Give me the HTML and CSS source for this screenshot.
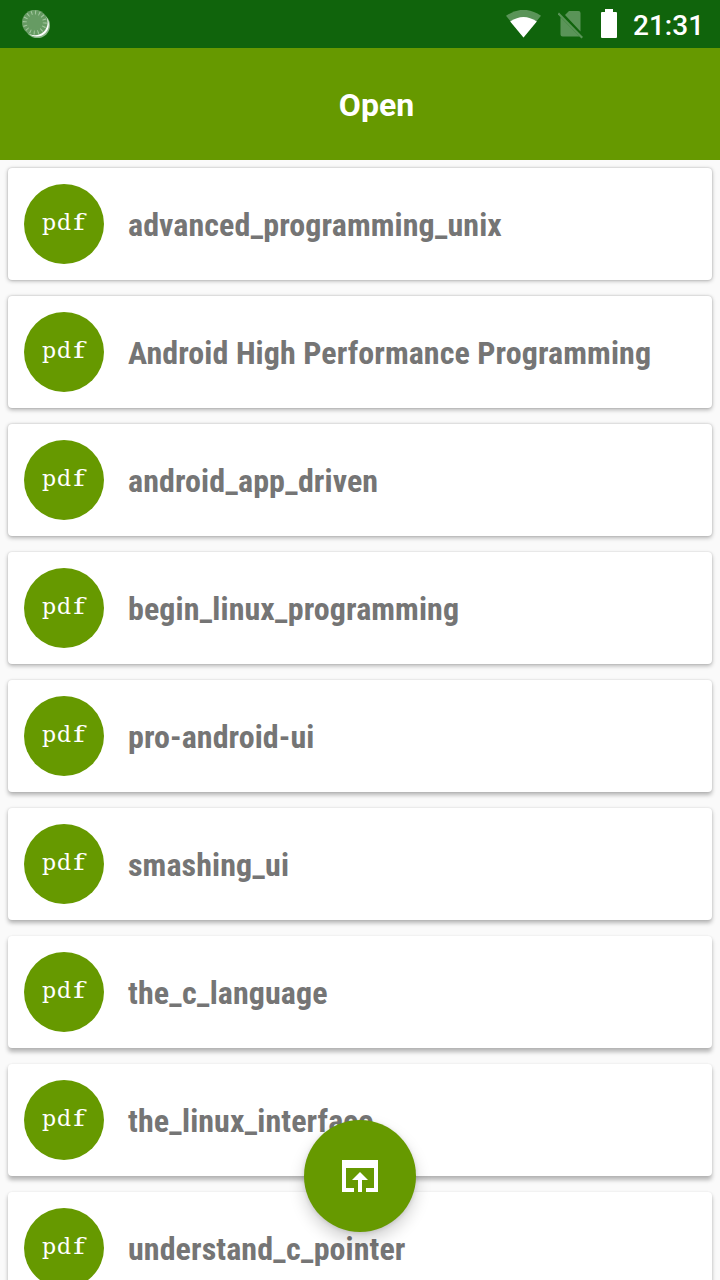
FILE: index.html
```html
<!DOCTYPE html>
<html lang="en">
<head>
<meta charset="utf-8">
<title>Open</title>
<link rel="stylesheet" href="styles.css">
</head>
<body>
<div class="screen">
  <header class="status">
    <svg class="sync" width="30" height="30" viewBox="0 0 30 30">
      <circle cx="15.4" cy="15.5" r="12.6" fill="#8cb68b"/>
      <circle cx="14.8" cy="14.5" r="12" fill="#fff"/>
      <circle cx="12.8" cy="12.500" r="12.800" fill="#669b63"/>
      <circle cx="12.8" cy="12.500" r="10" fill="none" stroke="#a5c8a1" stroke-width="4" stroke-dasharray="1 2.927"/>
    </svg>
    <svg class="wifi" width="36" height="28" viewBox="0 0 36 28">
      <path d="M0 5.800Q17.500 -6.200 35 5.800L17.500 27.500Z" fill="#5a9458"/>
      <path d="M4.200 11.500Q17.500 2.300 30.800 11.500L17.500 27.500Z" fill="#fff"/>
    </svg>
    <svg class="sim" width="26" height="30" viewBox="0 0 26 30">
      <path d="M7 5L11 1H20.500Q22.500 1 22.500 3V21.500ZM2.500 7L21.700 26.500H4.500Q2.500 26.500 2.500 24.500Z" fill="#5a9458"/>
      <path d="M.2 3.200L24.200 27.800" stroke="#5a9458" stroke-width="2.200"/>
    </svg>
    <svg class="battery" width="17" height="30" viewBox="0 0 17 30">
      <path d="M5 0H13V3H16Q17 3 17 4V28Q17 29 16 29H2Q1 29 1 28V4Q1 3 2 3H5Z" fill="#fff"/>
    </svg>
    <span class="clock">21:31</span>
  </header>
  <div class="toolbar"><h1 class="title">Open</h1></div>
  <main class="list">
    <article class="card s1"><span class="badge"><span>p</span><span>d</span><span class="wide">f</span></span><span class="name">advanced_programming_unix</span></article>
    <article class="card s2"><span class="badge"><span>p</span><span>d</span><span class="wide">f</span></span><span class="name">Android High Performance Programming</span></article>
    <article class="card s3"><span class="badge"><span>p</span><span>d</span><span class="wide">f</span></span><span class="name">android_app_driven</span></article>
    <article class="card s4"><span class="badge"><span>p</span><span>d</span><span class="wide">f</span></span><span class="name">begin_linux_programming</span></article>
    <article class="card s5"><span class="badge"><span>p</span><span>d</span><span class="wide">f</span></span><span class="name">pro-android-ui</span></article>
    <article class="card s6"><span class="badge"><span>p</span><span>d</span><span class="wide">f</span></span><span class="name">smashing_ui</span></article>
    <article class="card s7"><span class="badge"><span>p</span><span>d</span><span class="wide">f</span></span><span class="name">the_c_language</span></article>
    <article class="card s8"><span class="badge"><span>p</span><span>d</span><span class="wide">f</span></span><span class="name">the_linux_interface</span></article>
    <article class="card s8"><span class="badge"><span>p</span><span>d</span><span class="wide">f</span></span><span class="name">understand_c_pointer</span></article>
  </main>
  <button class="fab" aria-label="Open file">
    <svg width="48" height="48" viewBox="0 0 48 48">
      <path d="M6 8H42V40H30V36H38V16H10V36H18V40H6ZM24 20L32 28H26V40H22V28H16Z" fill="#fff"/>
    </svg>
  </button>
</div>
</body>
</html>
```
FILE: styles.css
```css
body { margin: 0; font-family: Roboto, sans-serif; }
.screen { position: relative; width: 720px; height: 1280px; overflow: hidden; background: #fafafa; }
.status { display: flex; height: 48px; background: #10640c; color: #fff; }
.sync { margin: 10px 0 0 22px; }
.wifi { margin: 10px 0 0 454px; }
.sim { margin: 10px 0 0 16px; }
.battery { margin: 9px 0 0 16px; }
.clock { margin: 9px 0 0 16px; font-size: 28px; line-height: 34px; font-weight: 500; }
.toolbar { display: flex; height: 112px; justify-content: center; background: #669900; color: #fff; }
.title { margin: 38px 0 0 33px; font-size: 32px; line-height: 38px; font-weight: 700; }
.list { display: flex; flex-direction: column; gap: 16px; padding: 8px; }
.card { display: flex; flex: none; align-items: center; gap: 24px; height: 112px; padding: 0 16px; box-sizing: border-box; border-radius: 4px; background: #fff; }
.badge { display: grid; grid-template-columns: repeat(3, 15px); justify-content: center; justify-items: center; box-sizing: border-box; width: 80px; height: 80px; padding-top: 25px; border-radius: 50%; background: #669900; color: #fff; font-family: "DejaVu Serif", serif; font-size: 22px; line-height: 28px; }
.badge .wide { transform: scaleX(1.4); }
.name { padding-top: 1px; color: #757575; font-family: "Roboto Condensed", Roboto, sans-serif; font-size: 32px; line-height: 38px; font-weight: 700; font-stretch: 75%; letter-spacing: .08px; white-space: nowrap; }
.s1 { box-shadow: 0 1px 4px rgba(0,0,0,.28), 0 0 2px rgba(0,0,0,.2); }
.s2 { box-shadow: 0 1.300px 4px rgba(0,0,0,.28), 0 0 2px rgba(0,0,0,.18); }
.s3 { box-shadow: 0 1.600px 4px rgba(0,0,0,.28), 0 0 2px rgba(0,0,0,.16); }
.s4 { box-shadow: 0 2px 4px rgba(0,0,0,.28), 0 0 2px rgba(0,0,0,.14); }
.s5 { box-shadow: 0 2.300px 4px rgba(0,0,0,.28), 0 0 2px rgba(0,0,0,.12); }
.s6 { box-shadow: 0 2.600px 4px rgba(0,0,0,.28), 0 0 2px rgba(0,0,0,.1); }
.s7 { box-shadow: 0 3.300px 4px rgba(0,0,0,.27), 0 0 2px rgba(0,0,0,.08); }
.s8 { box-shadow: 0 3.300px 4px rgba(0,0,0,.27), 0 0 2px rgba(0,0,0,.08); }
.fab { position: absolute; left: 304px; top: 1120px; display: flex; align-items: center; justify-content: center; width: 112px; height: 112px; padding: 0; border: 0; border-radius: 50%; background: #669900; box-shadow: 0 8px 16px rgba(0,0,0,.18), 0 1px 4px rgba(0,0,0,.12); }
```
